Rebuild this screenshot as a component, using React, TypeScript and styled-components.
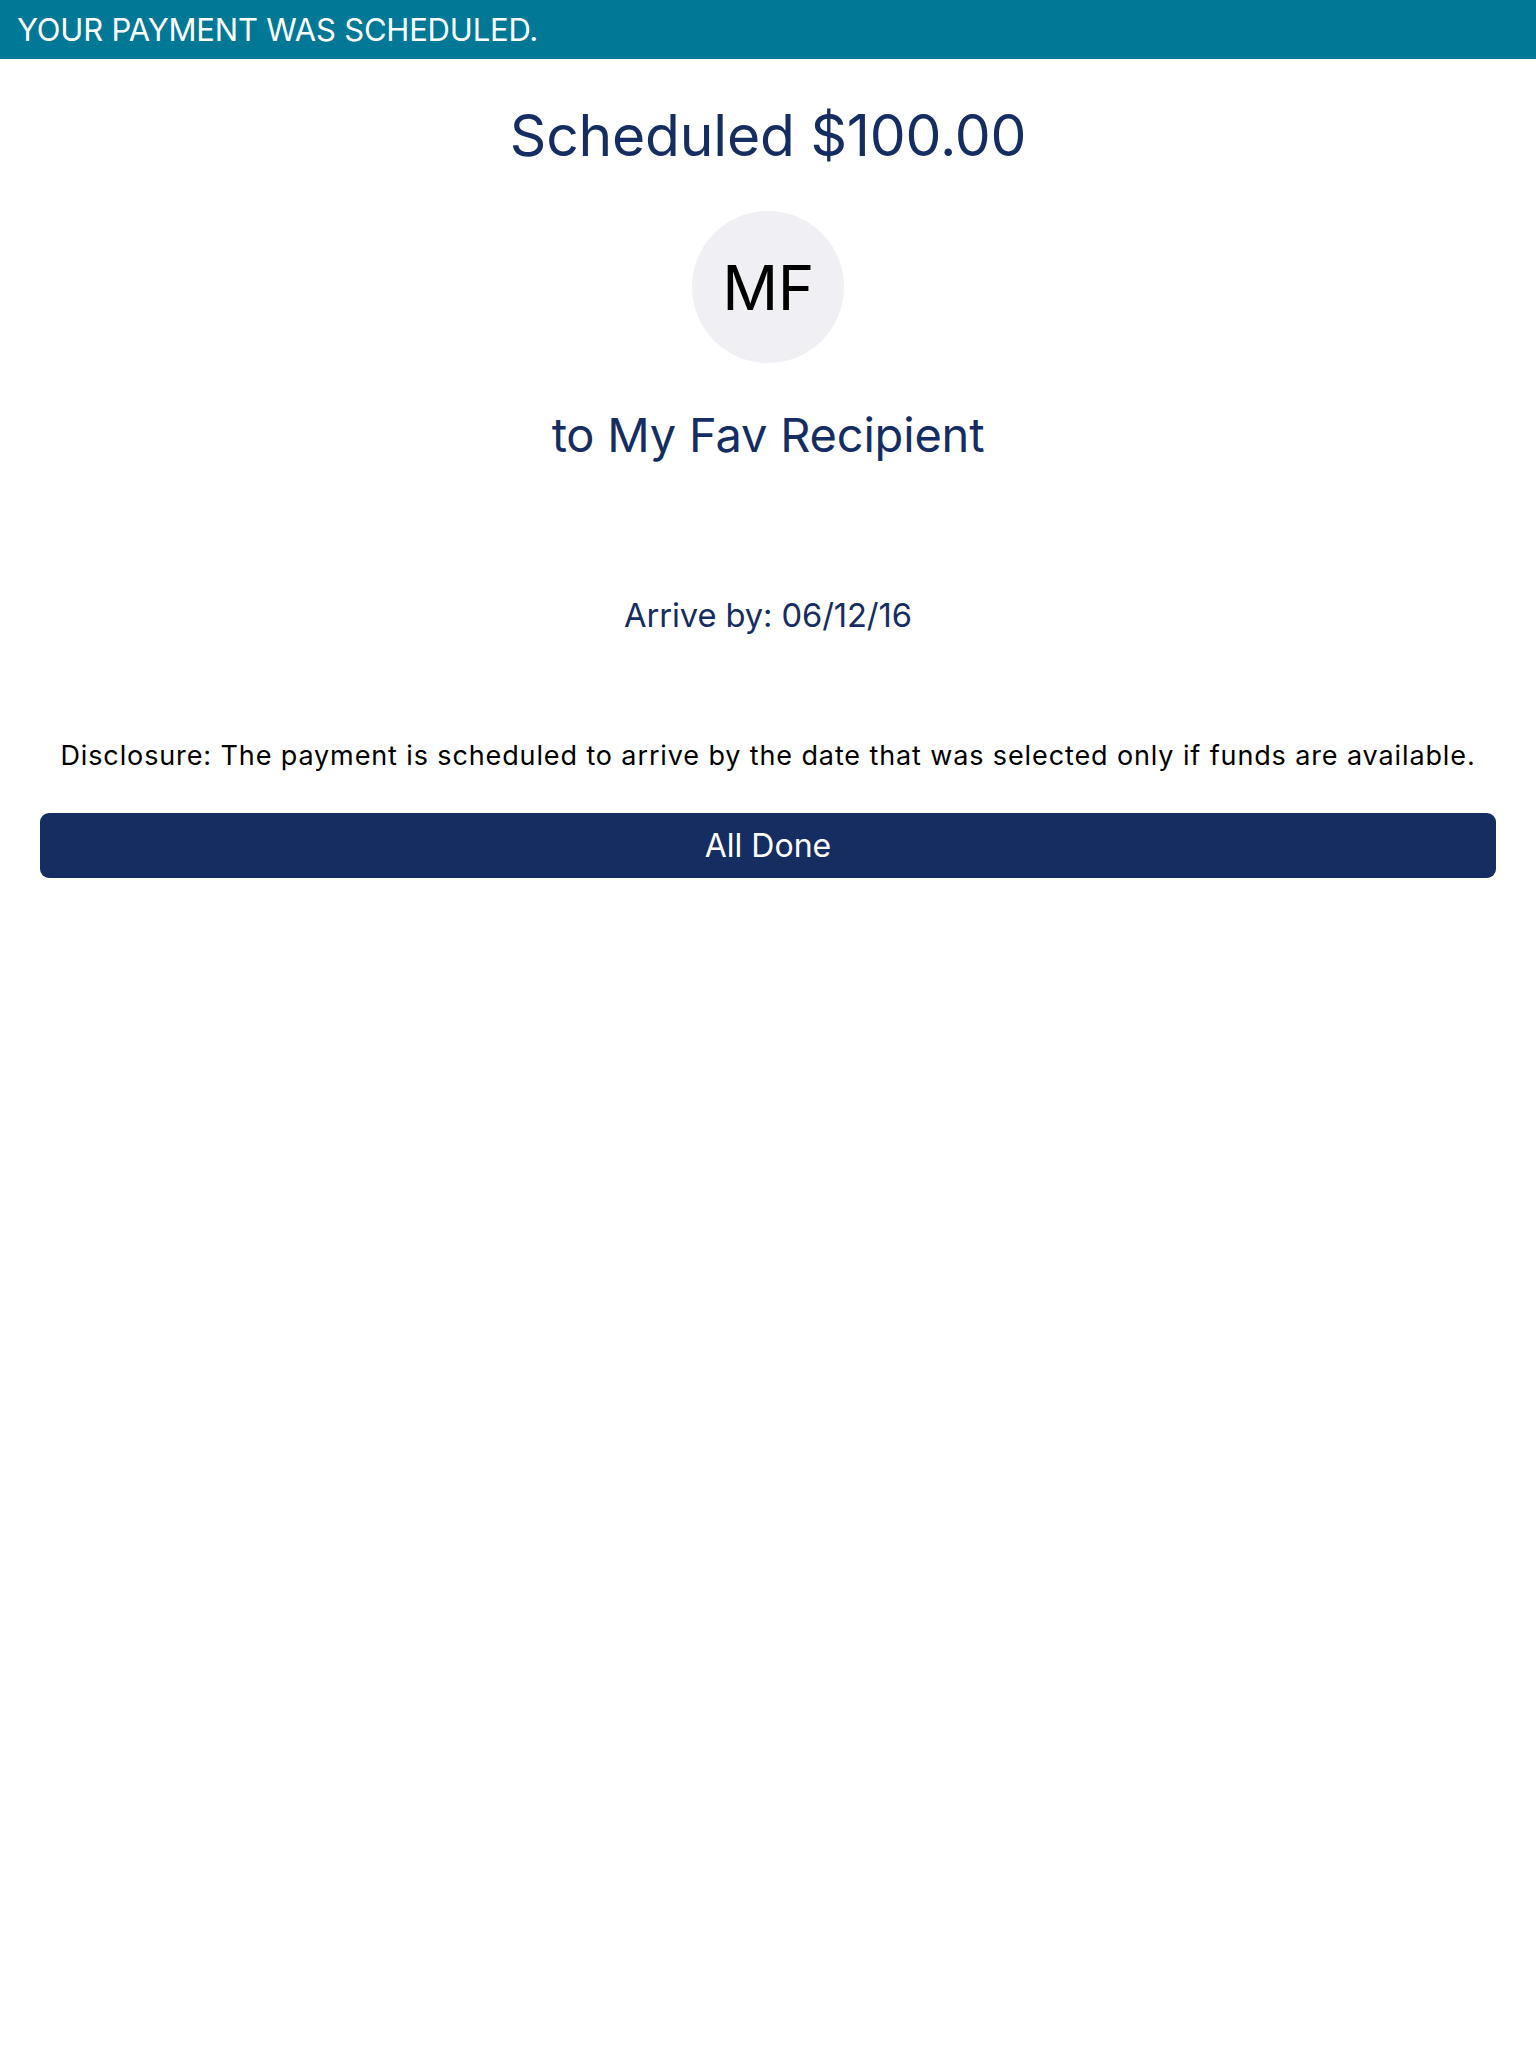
import React from "react";
import styled, { createGlobalStyle } from "styled-components";

const GlobalStyle = createGlobalStyle`
  html, body {
    margin: 0;
    padding: 0;
    background: #ffffff;
  }
  body {
    font-family: Inter, "Noto Sans", "Liberation Sans", sans-serif;
    -webkit-font-smoothing: antialiased;
  }
`;

const Page = styled.div`
  display: flex;
  flex-direction: column;
  align-items: stretch;
  width: 100%;
  min-height: 2048px;
  background: #ffffff;
`;

const Banner = styled.div`
  height: 59px;
  background: #007896;
  display: flex;
  align-items: center;
  padding: 0 17px;
  color: #ffffff;
  font-size: 31px;
  font-weight: 400;
  letter-spacing: -0.2px;
  text-transform: uppercase;
`;

const Content = styled.main`
  display: flex;
  flex-direction: column;
  align-items: center;
  padding: 0 40px;
`;

const Title = styled.h1`
  margin: 48px 0 0;
  font-size: 57px;
  line-height: 57px;
  font-weight: 400;
  color: #162d62;
  letter-spacing: -0.2px;
`;

const Avatar = styled.div`
  margin-top: 47px;
  width: 152px;
  height: 152px;
  border-radius: 50%;
  background: #efeff4;
  display: flex;
  align-items: center;
  justify-content: center;
  color: #000000;
  font-size: 62px;
  font-weight: 400;
  letter-spacing: -0.5px;
`;

const Recipient = styled.h2`
  margin: 48px 0 0;
  font-size: 47px;
  line-height: 47px;
  font-weight: 400;
  color: #162d62;
  letter-spacing: -0.2px;
`;

const Arrive = styled.p`
  margin: 141px 0 0;
  font-size: 32.7px;
  line-height: 32.7px;
  color: #162d62;
  letter-spacing: -0.1px;
`;

const Disclosure = styled.p`
  margin: 110px 0 0;
  font-size: 27px;
  line-height: 27px;
  color: #000000;
  text-align: center;
  letter-spacing: 0.88px;
  white-space: nowrap;
`;

const DoneButton = styled.button`
  margin-top: 44px;
  align-self: stretch;
  height: 65px;
  border: none;
  border-radius: 9px;
  background: #162d62;
  color: #ffffff;
  font-family: inherit;
  font-size: 32px;
  font-weight: 400;
  cursor: pointer;
`;

export default function App() {
  return (
    <Page>
      <GlobalStyle />
      <Banner>Your payment was scheduled.</Banner>
      <Content>
        <Title>Scheduled $100.00</Title>
        <Avatar>MF</Avatar>
        <Recipient>to My Fav Recipient</Recipient>
        <Arrive>Arrive by: 06/12/16</Arrive>
        <Disclosure>
          Disclosure: The payment is scheduled to arrive by the date that was selected only if funds are available.
        </Disclosure>
        <DoneButton>All Done</DoneButton>
      </Content>
    </Page>
  );
}
